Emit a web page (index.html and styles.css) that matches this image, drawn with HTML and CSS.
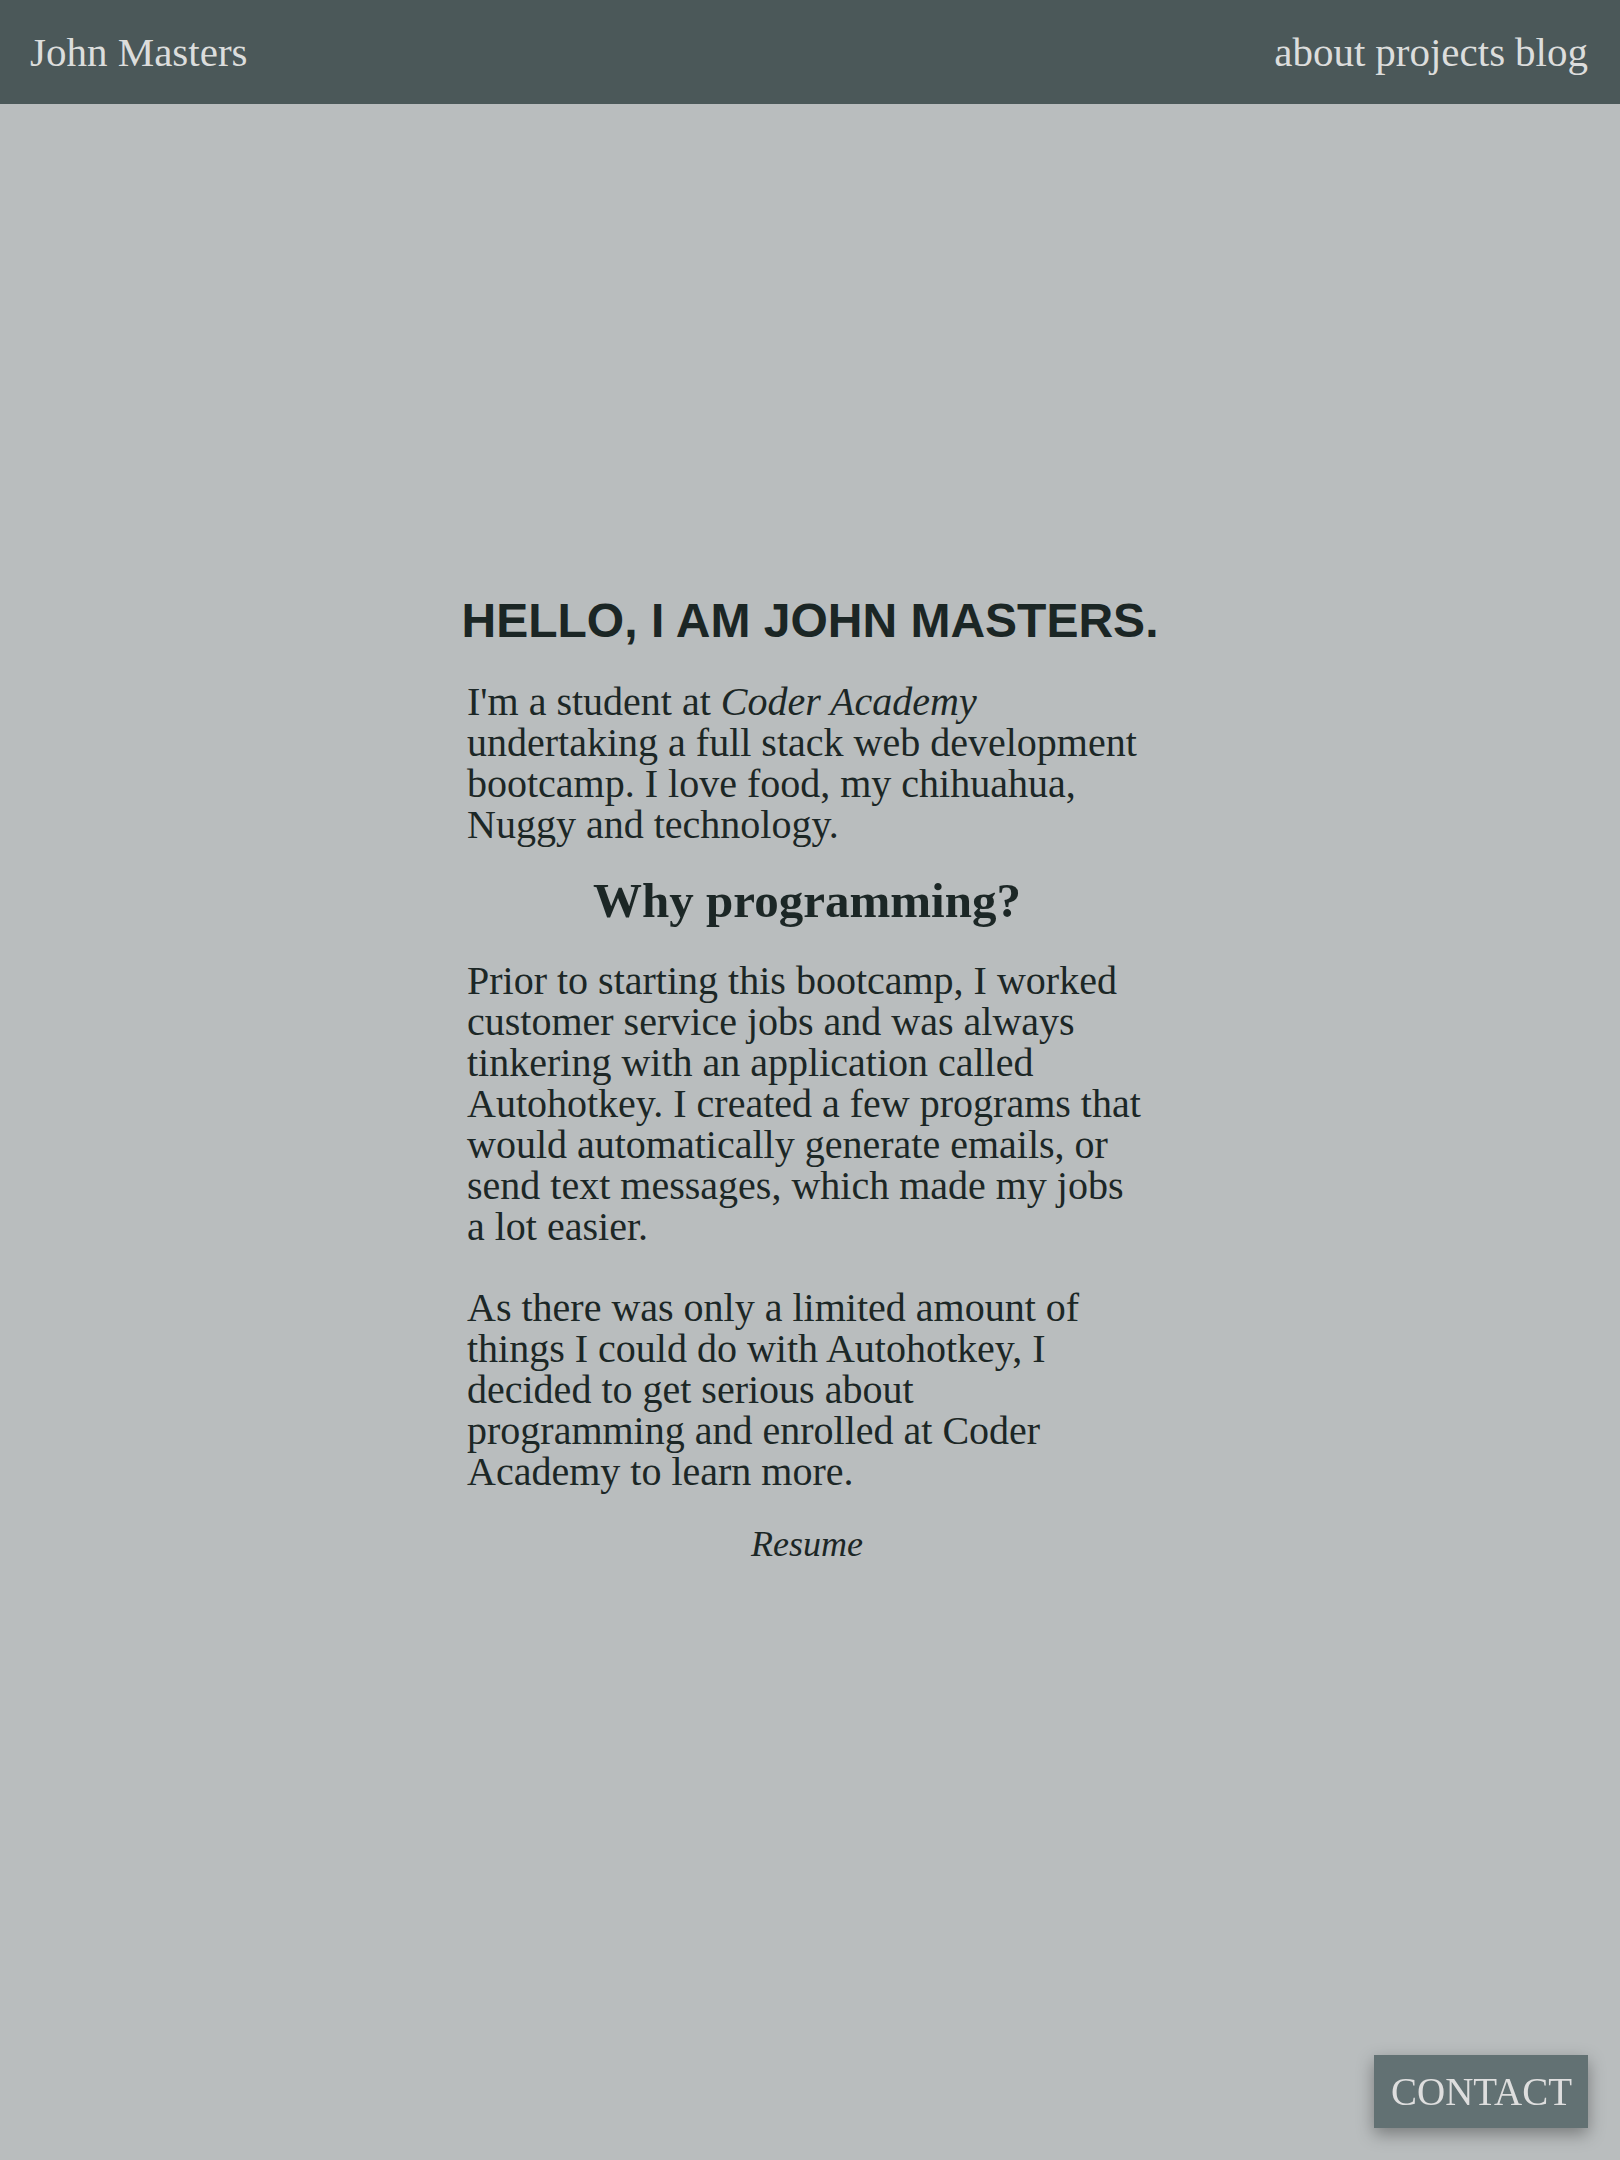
FILE: index.html
```html
<!DOCTYPE html>
<html lang="en">
<head>
<meta charset="utf-8">
<title>John Masters</title>
<link rel="stylesheet" href="styles.css">
</head>
<body>
<header class="site-header">
  <a class="brand" href="#">John Masters</a>
  <nav class="nav">
    <a href="#">about</a>
    <a href="#">projects</a>
    <a href="#">blog</a>
  </nav>
</header>
<main class="main">
  <section class="about">
    <h1 class="hero-title">HELLO, I AM JOHN MASTERS.</h1>
    <p class="text">I'm a student at <em>Coder Academy</em> undertaking a full stack web development bootcamp. I love food, my chihuahua, Nuggy and technology.</p>
    <h2 class="sub-title">Why programming?</h2>
    <p class="text">Prior to starting this bootcamp, I worked customer service jobs and was always tinkering with an application called Autohotkey. I created a few programs that would automatically generate emails, or send text messages, which made my jobs a lot easier.</p>
    <p class="text text-gap">As there was only a limited amount of things I could do with Autohotkey, I decided to get serious about<br>programming and enrolled at Coder Academy to learn more.</p>
    <a class="resume" href="#">Resume</a>
  </section>
</main>
<a class="contact" href="#">CONTACT</a>
</body>
</html>
```

FILE: styles.css
```css
* {
  box-sizing: border-box;
}

html, body {
  margin: 0;
  padding: 0;
}

body {
  background: #b9bdbe;
  color: #1c2726;
  font-family: "Liberation Serif", "Times New Roman", serif;
}

a {
  color: inherit;
  text-decoration: none;
}

.site-header {
  position: fixed;
  top: 0;
  left: 0;
  right: 0;
  height: 104px;
  background: #4b5859;
  color: #dcdddc;
  display: flex;
  align-items: center;
  justify-content: space-between;
  padding: 0 32px 0 30px;
  font-size: 41px;
  line-height: 44px;
  z-index: 2;
}

.nav {
  display: flex;
  gap: 10px;
}

.main {
  min-height: 100vh;
  display: flex;
  align-items: center;
  justify-content: center;
  padding: 0 6px 4px 0;
}

.about {
  width: 680px;
  display: flex;
  flex-direction: column;
}

.hero-title {
  margin: 0;
  align-self: center;
  position: relative;
  left: 3px;
  font-family: "Liberation Sans", Arial, sans-serif;
  font-weight: 700;
  font-size: 48px;
  line-height: 56px;
  text-align: center;
  white-space: nowrap;
  color: #1b2625;
}

.text {
  margin: 32px 0 0;
  font-size: 40px;
  line-height: 41px;
}

.text em {
  font-style: italic;
}

.sub-title {
  margin: 28px 0 0;
  font-size: 49px;
  line-height: 56px;
  font-weight: 700;
  text-align: center;
}

.sub-title + .text {
  margin-top: 31px;
}

.text-gap {
  margin-top: 40px;
}

.resume {
  margin-top: 32px;
  align-self: center;
  font-style: italic;
  font-size: 36px;
  line-height: 40px;
}

.contact {
  position: fixed;
  right: 32px;
  bottom: 32px;
  background: #627173;
  color: #dedede;
  font-size: 39px;
  line-height: 41px;
  padding: 16px 16px 16px 17px;
  box-shadow: 0 6px 16px rgba(0, 0, 0, 0.35);
}
```
